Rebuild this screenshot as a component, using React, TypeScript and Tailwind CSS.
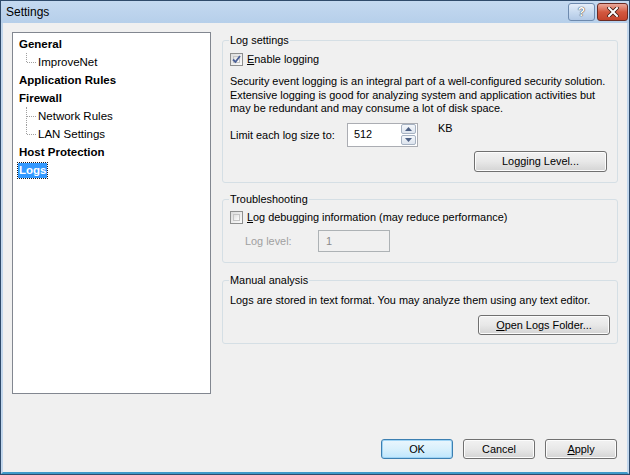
import React from 'react';

const FONT = { fontFamily: '"Liberation Sans", Arial, sans-serif' };

function CheckBox({ checked }: { checked?: boolean }) {
    return (
        <span className="relative inline-flex h-[13px] w-[13px] shrink-0 items-center justify-center border border-[#8e8f8f] bg-gradient-to-br from-[#dcdcdc] to-[#fbfbfb]">
            <span className="absolute inset-[2px] border border-[#c5c5c5] bg-gradient-to-br from-[#e1e1e1] to-[#fdfdfd]" />
            {checked && (
                <svg className="relative" width="9" height="9" viewBox="0 0 9 9">
                    <path d="M1 4.5 L3.5 7 L8 1" fill="none" stroke="#4a5f97" strokeWidth="1.8" />
                </svg>
            )}
        </span>
    );
}

function Button({ children, className = '', focused }: { children: React.ReactNode; className?: string; focused?: boolean }) {
    return (
        <button
            type="button"
            className={
                'flex items-center justify-center rounded-[3px] border text-[10.9px] text-black ' +
                (focused
                    ? 'border-[#3c7fb1] bg-gradient-to-b from-[#eaf6fd] via-[#d9f0fc] to-[#bee6fd] shadow-[inset_0_0_0_1px_#9fd4f5] '
                    : 'border-[#707070] bg-gradient-to-b from-[#f2f2f2] via-[#e8e8e8] to-[#d4d4d4] shadow-[inset_0_0_0_1px_#fcfcfc] ') +
                className
            }
        >
            {children}
        </button>
    );
}

function TreeItem({ label, bold, selected }: { label: string; bold?: boolean; selected?: boolean }) {
    return (
        <div className="flex h-[18px] items-center">
            <span
                className={
                    'px-[1px] leading-[15px] ' +
                    (bold ? 'font-bold ' : '') +
                    (selected ? 'bg-[#3399ff] text-white outline-1 outline-dotted outline-[#1a1a1a]' : 'text-black')
                }
            >
                {label}
            </span>
        </div>
    );
}

function TreeChild({ label, last }: { label: string; last?: boolean }) {
    return (
        <div className="relative flex h-[18px] items-center pl-[19px]">
            <span
                className={
                    'absolute left-[8px] top-0 w-0 border-l border-dotted border-[#a0a0a0] ' + (last ? 'h-[9px]' : 'h-[18px]')
                }
            />
            <span className="absolute left-[9px] top-[9px] w-[9px] border-t border-dotted border-[#a0a0a0]" />
            <span className="px-[1px] text-black">{label}</span>
        </div>
    );
}

function Group({ title, children, className = '' }: { title: string; children: React.ReactNode; className?: string }) {
    return (
        <fieldset className={'rounded-[3px] border border-[#d5dfe5] px-[7px] ' + className}>
            <legend className="-ml-[1px] px-[1px] leading-[13px] text-black">{title}</legend>
            {children}
        </fieldset>
    );
}

export default function App() {
    return (
        <div style={FONT} className="flex h-[475px] w-[630px] flex-col overflow-hidden border border-[#2f4b6b] text-[10.9px] leading-[13px] text-black">
            {/* Title bar */}
            <div className="flex h-[22px] shrink-0 items-center bg-gradient-to-b from-[#c4d9f0] to-[#b6cfea] pl-[5px] pr-[1px]">
                <span className="text-[12px] text-black">Settings</span>
                <div className="ml-auto flex gap-[2px]">
                    <div className="flex h-[18px] w-[27px] items-center justify-center rounded-[3px] border border-[#6d8aae] bg-gradient-to-b from-[#e4eefa] via-[#c9dbf0] to-[#b2c9e6]">
                        <span className="text-[12px] font-bold leading-none text-white [text-shadow:0_0_1px_#333,0_0_1px_#333]">?</span>
                    </div>
                    <div className="flex h-[18px] w-[31px] items-center justify-center rounded-[3px] border border-[#6b2a22] bg-gradient-to-b from-[#e9a99c] via-[#d2583f] to-[#c4442c]">
                        <svg width="12" height="10" viewBox="0 0 12 10">
                            <path d="M2 1 L10 9 M10 1 L2 9" stroke="#3a1a14" strokeWidth="3.6" strokeLinecap="square" />
                            <path d="M2 1 L10 9 M10 1 L2 9" stroke="#ffffff" strokeWidth="2" strokeLinecap="square" />
                        </svg>
                    </div>
                </div>
            </div>

            {/* Client area */}
            <div className="flex flex-1 flex-col border-x-2 border-b-2 border-x-[#c2d7ed] border-b-[#3f9ac9] bg-[#f0f0f0] pl-[9px] pr-[9px] pt-[9px]">
                <div className="flex h-[362px] gap-[11px]">
                    {/* Tree */}
                    <div className="h-full w-[199px] shrink-0 border border-[#828790] bg-white pl-[5px] pt-[2px] text-[11.5px]">
                        <TreeItem label="General" bold />
                        <TreeChild label="ImproveNet" last />
                        <TreeItem label="Application Rules" bold />
                        <TreeItem label="Firewall" bold />
                        <TreeChild label="Network Rules" />
                        <TreeChild label="LAN Settings" last />
                        <TreeItem label="Host Protection" bold />
                        <TreeItem label="Logs" bold selected />
                    </div>

                    {/* Right panel */}
                    <div className="flex w-[396px] flex-col pt-[2px]">
                        <Group title="Log settings" className="h-[149px]">
                            <label className="mt-[6px] flex items-center gap-[4px]">
                                <CheckBox checked />
                                <span>
                                    <u>E</u>nable logging
                                </span>
                            </label>
                            <p className="mt-[9px] leading-[13.5px]">
                                Security event logging is an integral part of a well-configured security solution.
                                <br />
                                Extensive logging is good for analyzing system and application activities but
                                <br />
                                may be redundant and may consume a lot of disk space.
                            </p>
                            <div className="mt-[7px] flex items-start">
                                <span className="mt-[6px] w-[117px]">Limit each log size to:</span>
                                <div className="flex h-[24px] w-[71px] items-center border border-[#abadb3] bg-white pl-[6px] pr-[1px]">
                                    <span className="flex-1">512</span>
                                    <div className="flex flex-col gap-[1px]">
                                        <div className="flex h-[10px] w-[15px] items-center justify-center rounded-[2px] border border-[#a6b2c2] bg-gradient-to-b from-[#f4f7fb] to-[#dde4ee]">
                                            <svg width="7" height="4" viewBox="0 0 7 4">
                                                <path d="M0 4 L3.5 0 L7 4 Z" fill="#4d6185" />
                                            </svg>
                                        </div>
                                        <div className="flex h-[10px] w-[15px] items-center justify-center rounded-[2px] border border-[#a6b2c2] bg-gradient-to-b from-[#f4f7fb] to-[#dde4ee]">
                                            <svg width="7" height="4" viewBox="0 0 7 4">
                                                <path d="M0 0 L3.5 4 L7 0 Z" fill="#4d6185" />
                                            </svg>
                                        </div>
                                    </div>
                                </div>
                                <span className="ml-[20px] -mt-[1px]">KB</span>
                            </div>
                            <div className="mt-[4px] flex justify-end pr-[3px]">
                                <Button className="h-[21px] w-[133px]">
                                    <span>
                                        Lo<u>g</u>ging Level...
                                    </span>
                                </Button>
                            </div>
                        </Group>

                        <Group title="Troubleshooting" className="mt-[10px] h-[70px]">
                            <label className="mt-[5px] flex items-center gap-[4px]">
                                <CheckBox />
                                <span>
                                    <u>L</u>og debugging information (may reduce performance)
                                </span>
                            </label>
                            <div className="mt-[6px] flex items-center pl-[15px]">
                                <span className="w-[73px] text-[#a0a0a0]">Log level:</span>
                                <div className="flex h-[22px] w-[72px] items-center border border-[#adb2b5] bg-[#f0f0f0] pl-[7px] text-[#8a8a8a]">
                                    1
                                </div>
                            </div>
                        </Group>

                        <Group title="Manual analysis" className="mt-[11px] h-[70px]">
                            <p className="mt-[7px]">Logs are stored in text format. You may analyze them using any text editor.</p>
                            <div className="mt-[8px] flex justify-end">
                                <Button className="h-[20px] w-[132px]">
                                    <span>
                                        <u>O</u>pen Logs Folder...
                                    </span>
                                </Button>
                            </div>
                        </Group>
                    </div>
                </div>

                {/* Dialog buttons */}
                <div className="mt-[45px] flex justify-end gap-[10px] pr-[1px]">
                    <Button focused className="h-[20px] w-[72px]">
                        OK
                    </Button>
                    <Button className="h-[20px] w-[72px]">Cancel</Button>
                    <Button className="h-[20px] w-[72px]">
                        <span>
                            <u>A</u>pply
                        </span>
                    </Button>
                </div>
            </div>
        </div>
    );
}
